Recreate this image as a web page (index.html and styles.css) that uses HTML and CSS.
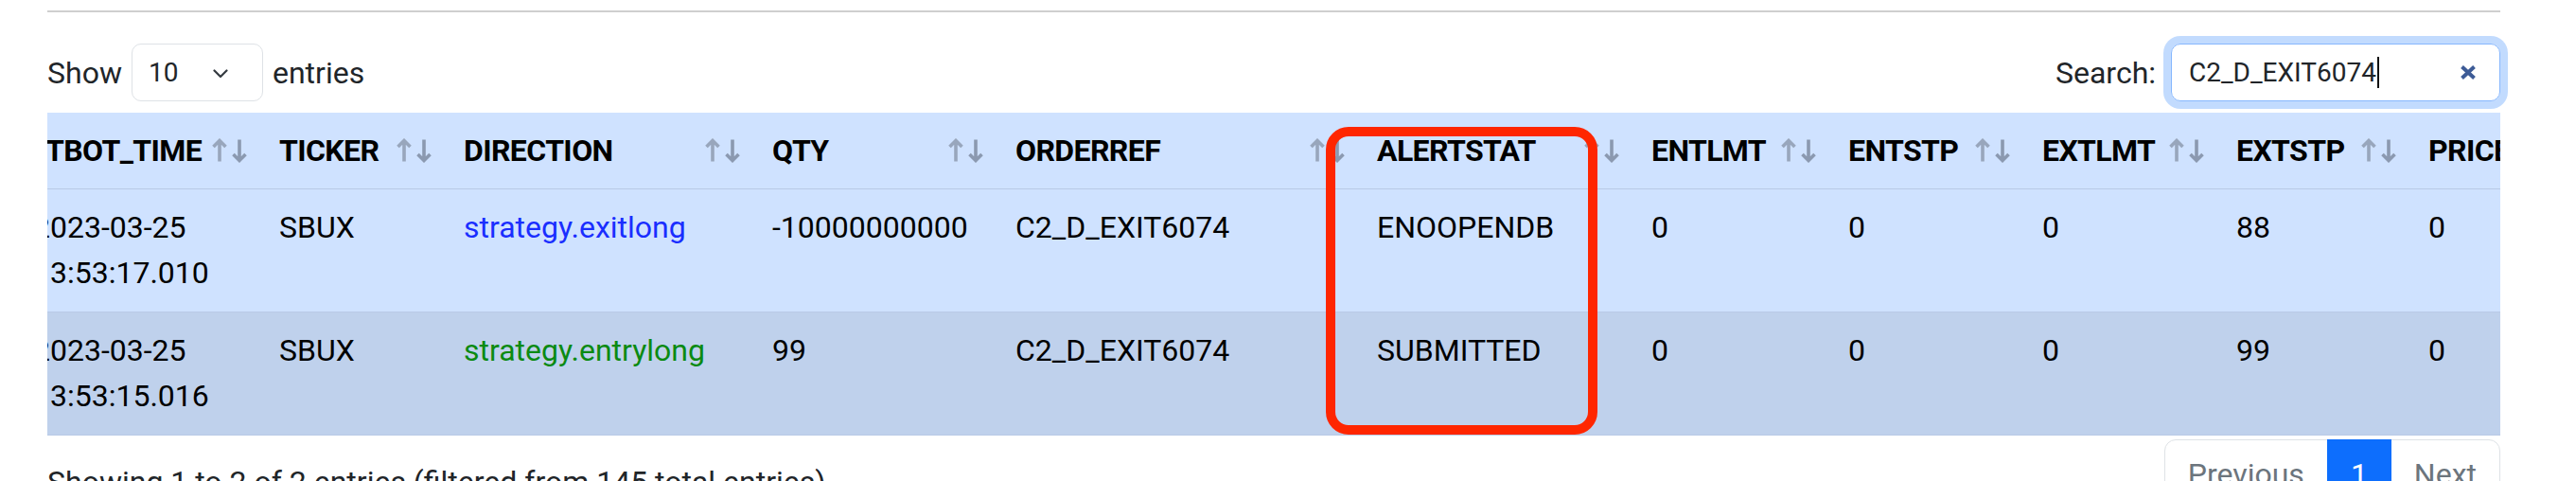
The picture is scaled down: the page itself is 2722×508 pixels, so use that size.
FILE: index.html
```html
<!DOCTYPE html>
<html lang="en">
<head>
<meta charset="utf-8">
<title>Orders</title>
<link rel="stylesheet" href="styles.css">
</head>
<body>
<div class="page">
  <hr class="rule">
  <div class="dt-top">
    <div class="len">
      <span>Show</span>
      <span class="select"><span>10</span>
        <svg class="chev" width="16" height="10" viewBox="0 0 16 10"><path d="M1.5 1.5 L8 8 L14.5 1.5" fill="none" stroke="#343a40" stroke-width="2.2" stroke-linecap="round" stroke-linejoin="round"/></svg>
      </span>
      <span>entries</span>
    </div>
    <div class="search">
      <span>Search:</span>
      <span class="input"><span>C2_D_EXIT6074</span><span class="caret"></span>
        <svg class="clear" width="18" height="17" viewBox="0 0 18 17"><path d="M2.5 2.5 L15.5 14.5 M15.5 2.5 L2.5 14.5" stroke="#3d5b96" stroke-width="4" stroke-linecap="butt"/></svg>
      </span>
    </div>
  </div>

  <div class="scroll">
    <table class="tbl">
      <colgroup>
        <col class="c1"><col class="c2"><col class="c3"><col class="c4"><col class="c5"><col class="c6"><col class="c7"><col class="c8"><col class="c9"><col class="c10"><col class="c11">
      </colgroup>
      <thead>
        <tr>
          <th class="first">TBOT_TIME<svg class="sort" width="40" height="26" viewBox="0 0 40 26"><path class="up" d="M8 24.5 V2.5 M1.5 9 L8 2.5 L14.5 9"/><path class="down" d="M29 1.5 V23.5 M22.5 17 L29 23.5 L35.5 17"/></svg></th>
          <th>TICKER<svg class="sort" width="40" height="26" viewBox="0 0 40 26"><path class="up" d="M8 24.5 V2.5 M1.5 9 L8 2.5 L14.5 9"/><path class="down" d="M29 1.5 V23.5 M22.5 17 L29 23.5 L35.5 17"/></svg></th>
          <th>DIRECTION<svg class="sort" width="40" height="26" viewBox="0 0 40 26"><path class="up" d="M8 24.5 V2.5 M1.5 9 L8 2.5 L14.5 9"/><path class="down" d="M29 1.5 V23.5 M22.5 17 L29 23.5 L35.5 17"/></svg></th>
          <th>QTY<svg class="sort" width="40" height="26" viewBox="0 0 40 26"><path class="up" d="M8 24.5 V2.5 M1.5 9 L8 2.5 L14.5 9"/><path class="down" d="M29 1.5 V23.5 M22.5 17 L29 23.5 L35.5 17"/></svg></th>
          <th>ORDERREF<svg class="sort" width="40" height="26" viewBox="0 0 40 26"><path class="up" d="M8 24.5 V2.5 M1.5 9 L8 2.5 L14.5 9"/><path class="down" d="M29 1.5 V23.5 M22.5 17 L29 23.5 L35.5 17"/></svg></th>
          <th>ALERTSTAT<svg class="sort" width="40" height="26" viewBox="0 0 40 26"><path class="up" d="M8 24.5 V2.5 M1.5 9 L8 2.5 L14.5 9"/><path class="down" d="M29 1.5 V23.5 M22.5 17 L29 23.5 L35.5 17"/></svg></th>
          <th>ENTLMT<svg class="sort" width="40" height="26" viewBox="0 0 40 26"><path class="up" d="M8 24.5 V2.5 M1.5 9 L8 2.5 L14.5 9"/><path class="down" d="M29 1.5 V23.5 M22.5 17 L29 23.5 L35.5 17"/></svg></th>
          <th>ENTSTP<svg class="sort" width="40" height="26" viewBox="0 0 40 26"><path class="up" d="M8 24.5 V2.5 M1.5 9 L8 2.5 L14.5 9"/><path class="down" d="M29 1.5 V23.5 M22.5 17 L29 23.5 L35.5 17"/></svg></th>
          <th>EXTLMT<svg class="sort" width="40" height="26" viewBox="0 0 40 26"><path class="up" d="M8 24.5 V2.5 M1.5 9 L8 2.5 L14.5 9"/><path class="down" d="M29 1.5 V23.5 M22.5 17 L29 23.5 L35.5 17"/></svg></th>
          <th>EXTSTP<svg class="sort" width="40" height="26" viewBox="0 0 40 26"><path class="up" d="M8 24.5 V2.5 M1.5 9 L8 2.5 L14.5 9"/><path class="down" d="M29 1.5 V23.5 M22.5 17 L29 23.5 L35.5 17"/></svg></th>
          <th>PRICE<svg class="sort" width="40" height="26" viewBox="0 0 40 26"><path class="up" d="M8 24.5 V2.5 M1.5 9 L8 2.5 L14.5 9"/><path class="down" d="M29 1.5 V23.5 M22.5 17 L29 23.5 L35.5 17"/></svg></th>
        </tr>
      </thead>
      <tbody>
        <tr class="r1">
          <td>2023-03-25 13:53:17.010</td>
          <td>SBUX</td>
          <td class="exit">strategy.exitlong</td>
          <td>-10000000000</td>
          <td>C2_D_EXIT6074</td>
          <td>ENOOPENDB</td>
          <td>0</td>
          <td>0</td>
          <td>0</td>
          <td>88</td>
          <td>0</td>
        </tr>
        <tr class="r2">
          <td>2023-03-25 13:53:15.016</td>
          <td>SBUX</td>
          <td class="entry">strategy.entrylong</td>
          <td>99</td>
          <td>C2_D_EXIT6074</td>
          <td>SUBMITTED</td>
          <td>0</td>
          <td>0</td>
          <td>0</td>
          <td>99</td>
          <td>0</td>
        </tr>
      </tbody>
    </table>
  </div>

  <div class="dt-bottom">
    <div class="info">Showing 1 to 2 of 2 entries (filtered from 145 total entries)</div>
    <ul class="pagination">
      <li class="page-item disabled"><span class="page-link">Previous</span></li>
      <li class="page-item active"><span class="page-link">1</span></li>
      <li class="page-item disabled"><span class="page-link">Next</span></li>
    </ul>
  </div>

  <div class="callout"></div>
</div>
</body>
</html>
```

FILE: styles.css
```css
html, body {
  margin: 0;
  padding: 0;
  background: #fff;
}

body {
  font-family: Roboto, "Liberation Sans", Arial, sans-serif;
  color: #212529;
  overflow: hidden;
}

.page {
  position: relative;
  width: 2592px;
  padding-left: 50px;
}

.rule {
  margin: 11px 0 0;
  border: 0;
  height: 2px;
  background: #cfcfcf;
}

.dt-top {
  display: flex;
  justify-content: space-between;
  align-items: center;
  height: 61px;
  margin-top: 33px;
  margin-bottom: 12px;
  font-size: 32px;
  line-height: 48px;
}

.len {
  display: flex;
  align-items: center;
  gap: 10px;
}

.select {
  box-sizing: border-box;
  width: 139px;
  height: 61px;
  border: 1px solid #dee2e6;
  border-radius: 10px;
  padding: 0 36px 0 17px;
  display: flex;
  align-items: center;
  justify-content: space-between;
  font-size: 28px;
  color: #212529;
}

.chev {
  display: block;
  margin-top: 2px;
}

.search {
  display: flex;
  align-items: center;
  gap: 16px;
}

.input {
  box-sizing: border-box;
  width: 348px;
  height: 61px;
  border: 1px solid #86b7fe;
  border-radius: 10px;
  box-shadow: 0 0 0 8px rgba(13, 110, 253, 0.25);
  padding: 0 24px 0 18px;
  display: flex;
  align-items: center;
  font-size: 28px;
  color: #212529;
}

.caret {
  display: block;
  width: 2px;
  height: 33px;
  background: #111;
  margin-left: 1px;
}

.clear {
  display: block;
  margin-left: auto;
}

.scroll {
  width: 2592px;
  overflow: hidden;
}

.tbl {
  margin-left: -31px;
  table-layout: fixed;
  border-collapse: collapse;
  width: 2751px;
  font-size: 32px;
  line-height: 48px;
  color: #000;
}

.c1 { width: 260px; }
.c2 { width: 195px; }
.c3 { width: 326px; }
.c4 { width: 257px; }
.c5 { width: 382px; }
.c6 { width: 290px; }
.c7 { width: 208px; }
.c8 { width: 205px; }
.c9 { width: 205px; }
.c10 { width: 203px; }
.c11 { width: 220px; }

.tbl th {
  position: relative;
  padding: 16px;
  text-align: left;
  font-weight: 700;
  letter-spacing: -0.6px;
  white-space: nowrap;
  background: #cfe2ff;
  border-bottom: 1px solid #b9cae6;
}

.tbl th.first {
  padding-left: 29px;
}

.sort {
  position: absolute;
  right: 15px;
  top: 27px;
  fill: none;
  stroke-width: 3.6px;
  stroke-linecap: butt;
  stroke-linejoin: miter;
}

.sort .up {
  stroke: #98a6bc;
}

.sort .down {
  stroke: #8b99b0;
}

.tbl td {
  padding: 16px 16px 17px;
  vertical-align: top;
  border-bottom: 1px solid #b9cae6;
}

.r1 td {
  background: #cfe2ff;
}

.r2 td {
  background: #bfd1ec;
}

.exit {
  color: #1a2eff;
}

.entry {
  color: #0b8a12;
}

.dt-bottom {
  display: flex;
  justify-content: space-between;
  align-items: flex-start;
  margin-top: 4px;
  font-size: 32px;
  line-height: 48px;
}

.info {
  padding-top: 21px;
  color: #212529;
}

.pagination {
  display: flex;
  list-style: none;
  margin: 0;
  padding: 0;
}

.page-link {
  display: block;
  position: relative;
  padding: 12px 24px;
  border: 1px solid #dee2e6;
  color: #6c757d;
  background: #fff;
}

.page-item + .page-item .page-link {
  margin-left: -1px;
}

.page-item:first-child .page-link {
  border-radius: 12px 0 0 12px;
}

.page-item:last-child .page-link {
  border-radius: 0 12px 12px 0;
}

.page-item.active .page-link {
  z-index: 1;
  background: #0d6efd;
  border-color: #0d6efd;
  color: #fff;
}

.callout {
  position: absolute;
  left: 1401px;
  top: 123px;
  width: 287px;
  height: 325px;
  box-sizing: border-box;
  border: 10px solid #ff2600;
  border-radius: 24px;
  pointer-events: none;
}
```
